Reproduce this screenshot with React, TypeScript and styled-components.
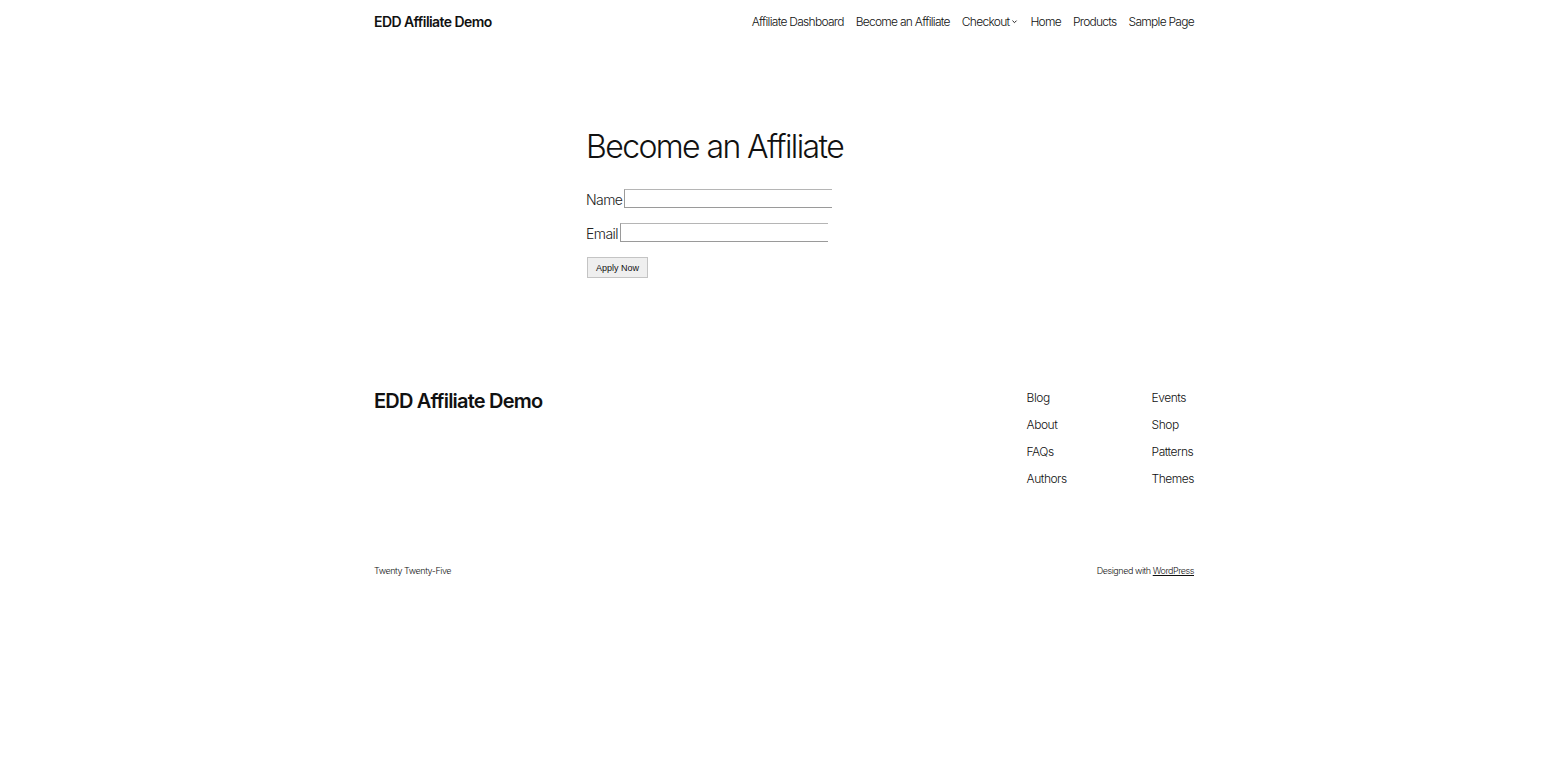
import React from 'react'
import styled, { createGlobalStyle } from 'styled-components'

const GlobalStyle = createGlobalStyle`
    html, body {
        margin: 0;
        padding: 0;
        background: #ffffff;
        color: #111111;
        font-family: Inter, "Liberation Sans", sans-serif;
    }
`

const Page = styled.div`
    width: 820px;
    margin: 0 auto;
`

const Header = styled.header`
    display: flex;
    align-items: center;
    justify-content: space-between;
    height: 42px;
`

const SiteTitle = styled.a<{ $size: number }>`
    font-size: ${p => p.$size}px;
    font-weight: 600;
    letter-spacing: -0.04em;
    color: #111111;
    text-decoration: none;
`

const Nav = styled.nav`
    display: flex;
    align-items: center;
    gap: 12px;
`

const NavLink = styled.a`
    display: inline-flex;
    align-items: center;
    gap: 2px;
    font-size: 12px;
    font-weight: 300;
    letter-spacing: -0.06em;
    color: #111111;
    text-decoration: none;
`

const Main = styled.main`
    width: 396px;
    margin: 86px auto 0;
`

const Title = styled.h1`
    margin: 0 0 23px;
    font-size: 32px;
    font-weight: 300;
    letter-spacing: -0.05em;
    line-height: 1.2;
`

const Form = styled.form`
    display: flex;
    flex-direction: column;
    align-items: flex-start;
    gap: 15px;
`

const Field = styled.label`
    display: flex;
    align-items: flex-end;
    font-size: 14px;
    font-weight: 300;
    letter-spacing: -0.04em;
    color: #222222;
`

const Input = styled.input`
    width: 208px;
    height: 19px;
    box-sizing: border-box;
    margin-left: 2px;
    border: 1px solid #9a9a9a;
    border-right: none;
    border-top-color: #b5b5b5;
    padding: 0 4px;
    background: #ffffff;
`

const Button = styled.button`
    margin-left: 1px;
    width: 61px;
    height: 21px;
    padding: 0;
    border: 1px solid #c4c4c4;
    background: #efefef;
    font-family: "Liberation Sans", Arial, sans-serif;
    font-size: 9px;
    color: #111111;
`

const Footer = styled.footer`
    margin-top: 111px;
`

const FooterTop = styled.div`
    display: flex;
    justify-content: space-between;
    align-items: flex-start;
`

const FooterNav = styled.div`
    display: grid;
    grid-template-columns: 125px auto;
    row-gap: 10px;
`

const FooterLink = styled.a`
    font-size: 12px;
    font-weight: 300;
    letter-spacing: -0.04em;
    line-height: 17px;
    color: #111111;
    text-decoration: none;
`

const FooterBottom = styled.div`
    display: flex;
    justify-content: space-between;
    align-items: center;
    margin-top: 78px;
    font-size: 9px;
    font-weight: 300;
    letter-spacing: -0.05em;
    color: #111111;
`

const Credit = styled.a`
    color: #111111;
    text-decoration: underline;
    text-underline-offset: 1px;
`

const Chevron = () => (
    <svg width="7" height="7" viewBox="0 0 12 12" fill="none" stroke="#111" strokeWidth="1.6">
        <path d="M2.5 4.5 L6 8 L9.5 4.5" />
    </svg>
)

const navItems = ['Affiliate Dashboard', 'Become an Affiliate', 'Checkout', 'Home', 'Products', 'Sample Page']
const footerLinks = ['Blog', 'Events', 'About', 'Shop', 'FAQs', 'Patterns', 'Authors', 'Themes']

const App = () => {
    return (
        <>
            <GlobalStyle />
            <Page>
                <Header>
                    <SiteTitle $size={14} href="#">EDD Affiliate Demo</SiteTitle>
                    <Nav>
                        {navItems.map(item => (
                            <NavLink key={item} href="#">
                                {item}
                                {item === 'Checkout' && <Chevron />}
                            </NavLink>
                        ))}
                    </Nav>
                </Header>
                <Main>
                    <Title>Become an Affiliate</Title>
                    <Form onSubmit={e => e.preventDefault()}>
                        <Field>Name<Input type="text" /></Field>
                        <Field>Email<Input type="email" /></Field>
                        <Button type="submit">Apply Now</Button>
                    </Form>
                </Main>
                <Footer>
                    <FooterTop>
                        <SiteTitle $size={20} href="#">EDD Affiliate Demo</SiteTitle>
                        <FooterNav>
                            {footerLinks.map(link => (
                                <FooterLink key={link} href="#">{link}</FooterLink>
                            ))}
                        </FooterNav>
                    </FooterTop>
                    <FooterBottom>
                        <span>Twenty Twenty-Five</span>
                        <span>Designed with <Credit href="#">WordPress</Credit></span>
                    </FooterBottom>
                </Footer>
            </Page>
        </>
    )
}

export default App
